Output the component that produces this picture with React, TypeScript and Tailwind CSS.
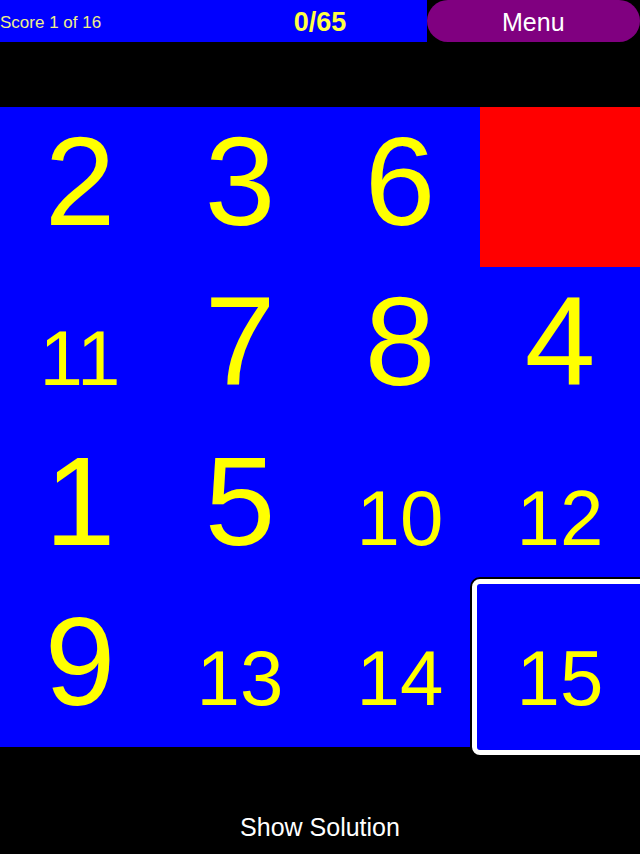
import React from "react";

const tiles: (number | null)[] = [2, 3, 6, null, 11, 7, 8, 4, 1, 5, 10, 12, 9, 13, 14, 15];

function Tile({ n }: { n: number | null }) {
  if (n === null) {
    return <div className="h-[160px] bg-[#ff0000]" />;
  }
  const big = n < 10;
  const text = (
    <span
      className={
        big
          ? "block text-[127px] leading-none text-[#ffff00] pt-[11px]"
          : "block text-[78px] leading-none text-[#ffff00] pt-[52px]"
      }
    >
      {n}
    </span>
  );
  if (n === 15) {
    return (
      <div className="relative h-[160px]">
        <div className="absolute -inset-2 z-10 flex justify-center rounded-lg border-[5px] border-white bg-[#0000ff] ring-2 ring-black">
          <span className="block text-[78px] leading-none text-[#ffff00] pt-[55px]">{n}</span>
        </div>
      </div>
    );
  }
  return <div className="flex h-[160px] justify-center bg-[#0000ff]">{text}</div>;
}

export default function App() {
  return (
    <div
      className="h-[854px] w-[640px] overflow-hidden bg-black"
      style={{ fontFamily: '"Liberation Sans", Arial, sans-serif' }}
    >
      <div className="grid h-[42px] grid-cols-3">
        <div className="flex items-center bg-[#0000ff] pt-[2px]">
          <span className="text-[17px] leading-none text-[#f0f08a]">Score 1 of 16</span>
        </div>
        <div className="flex items-center justify-center bg-[#0000ff] pt-[2px]">
          <span className="text-[27px] font-bold leading-none text-[#ffff44]">0/65</span>
        </div>
        <div className="flex items-center justify-center rounded-full bg-[#800080] pt-[2px]">
          <span className="text-[25px] leading-none text-white">Menu</span>
        </div>
      </div>
      <div className="h-[65px]" />
      <div className="grid grid-cols-4">
        {tiles.map((n, i) => (
          <Tile key={i} n={n} />
        ))}
      </div>
      <div className="flex justify-center pt-[68px]">
        <span className="text-[25px] leading-none text-white">Show Solution</span>
      </div>
    </div>
  );
}
